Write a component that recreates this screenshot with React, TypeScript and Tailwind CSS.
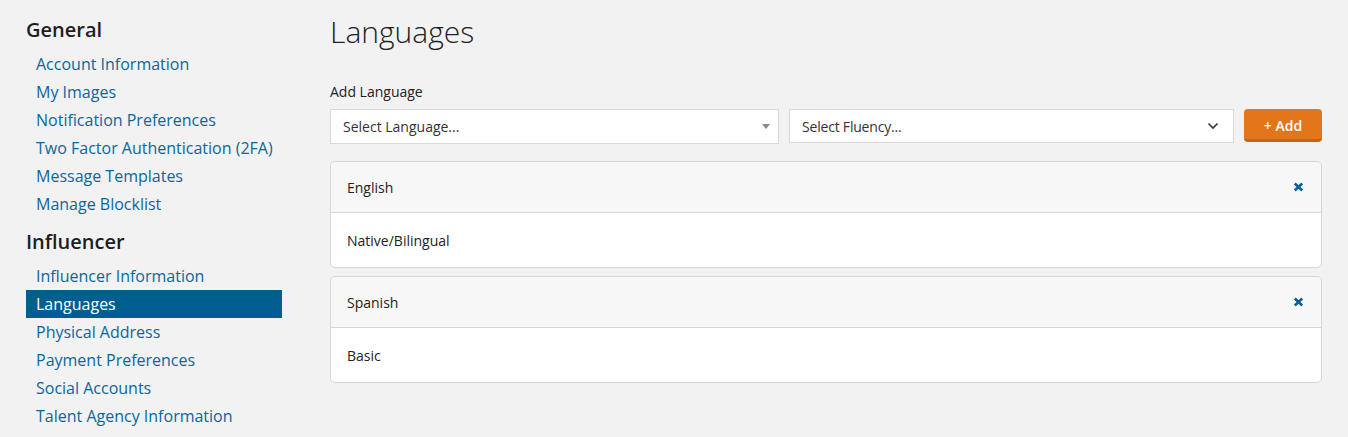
import React from "react";

const general = [
  "Account Information",
  "My Images",
  "Notification Preferences",
  "Two Factor Authentication (2FA)",
  "Message Templates",
  "Manage Blocklist",
];
const influencer = [
  "Influencer Information",
  "Languages",
  "Physical Address",
  "Payment Preferences",
  "Social Accounts",
  "Talent Agency Information",
];

function XIcon() {
  return (
    <svg width="11" height="10" viewBox="0 0 11 10" className="mr-[1px]">
      <path d="M1.8 1.5 L9.2 8.5 M9.2 1.5 L1.8 8.5" stroke="#0b5f92" strokeWidth="2.6" strokeLinecap="butt" fill="none" />
    </svg>
  );
}

function Card({ name, level }: { name: string; level: string }) {
  return (
    <div className="rounded-[5px] border border-[#d6d6d6] bg-white overflow-hidden">
      <div className="flex items-center justify-between h-[51px] px-4 bg-[#f7f7f7] border-b border-[#d6d6d6] rounded-t-[5px]">
        <span className="text-[14px] text-[#222]">{name}</span>
        <XIcon />
      </div>
      <div className="flex items-center h-[54px] px-4">
        <span className="text-[14px] text-[#222]">{level}</span>
      </div>
    </div>
  );
}

export default function App() {
  return (
    <div
      className="min-h-[437px] bg-[#f2f2f2] flex"
      style={{ fontFamily: '"Open Sans", "Liberation Sans", sans-serif' }}
    >
      <aside className="w-[256px] ml-[26px] pt-[16px] shrink-0">
        <h2 className="text-[20px] font-semibold text-[#1e1e1e] leading-[28px]">General</h2>
        <ul className="mt-[6px]">
          {general.map((g) => (
            <li key={g} className="h-[28px] flex items-center pl-[10px] text-[16px] text-[#0d669b]">
              {g}
            </li>
          ))}
        </ul>
        <h2 className="text-[20px] font-semibold text-[#1e1e1e] leading-[28px] mt-[10px]">Influencer</h2>
        <ul className="mt-[6px]">
          {influencer.map((g) => (
            <li
              key={g}
              className={
                g === "Languages"
                  ? "h-[28px] flex items-center pl-[10px] text-[16px] text-white bg-[#005e91]"
                  : "h-[28px] flex items-center pl-[10px] text-[16px] text-[#0d669b]"
              }
            >
              {g}
            </li>
          ))}
        </ul>
      </aside>
      <main className="ml-[48px] w-[992px] pt-[12px]">
        <h1 className="text-[30px] font-light text-[#222] leading-[40px]">Languages</h1>
        <label className="block mt-[30px] text-[14px] text-[#222] leading-[20px]">Add Language</label>
        <div className="flex items-start gap-[10px] mt-[7px]">
          <div className="w-[449px] h-[35px] bg-white border border-[#d9d9d9] flex items-center justify-between pl-[12px] pr-[7px]">
            <span className="text-[14px] text-[#333]">Select Language...</span>
            <svg width="8" height="5" viewBox="0 0 8 5" className="mr-[1px]">
              <path d="M0 0 L8 0 L4 5 Z" fill="#888" />
            </svg>
          </div>
          <div className="w-[445px] h-[34px] bg-white border border-[#d9d9d9] flex items-center justify-between pl-[12px] pr-[14px]">
            <span className="text-[14px] text-[#333] tracking-[-0.2px]">Select Fluency...</span>
            <svg width="12" height="8" viewBox="0 0 12 8">
              <path d="M1.5 1.5 L6 6 L10.5 1.5" stroke="#333" strokeWidth="1.6" fill="none" />
            </svg>
          </div>
          <button className="w-[78px] h-[33px] rounded-[4px] bg-[#e3751a] border-b-[3px] border-[#c9620f] text-white text-[14px] font-semibold flex items-center justify-center pt-[2px]">
            + Add
          </button>
        </div>
        <div className="mt-[17px] flex flex-col gap-[8px]">
          <Card name="English" level="Native/Bilingual" />
          <Card name="Spanish" level="Basic" />
        </div>
      </main>
    </div>
  );
}
